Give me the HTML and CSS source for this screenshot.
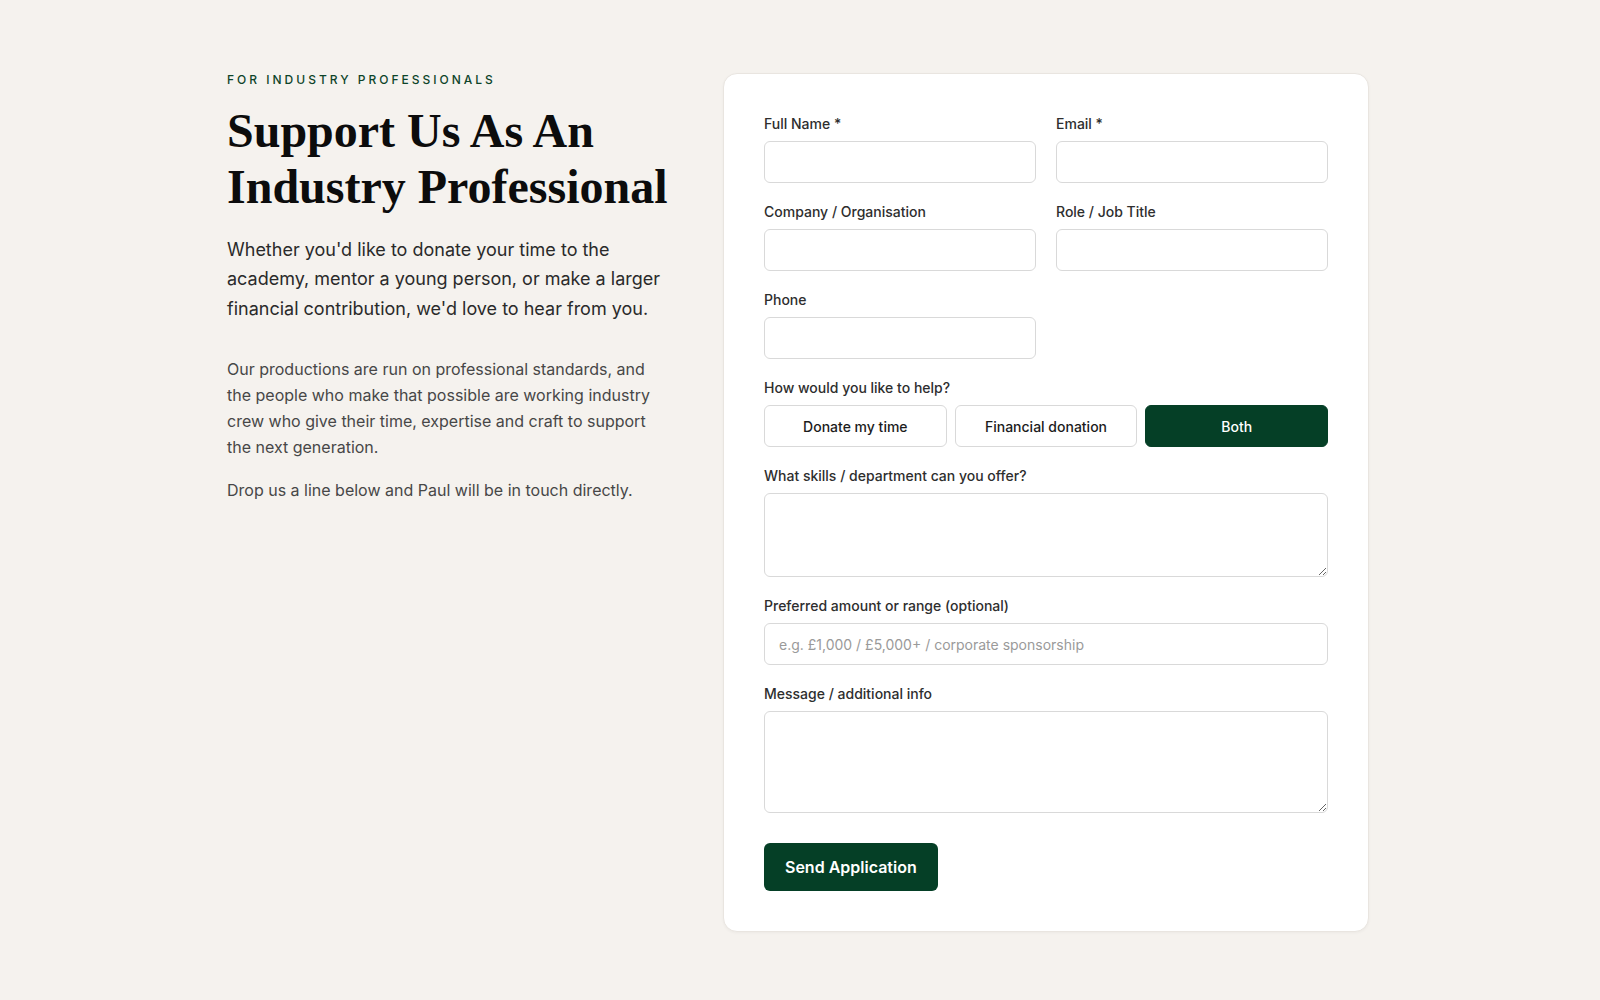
FILE: index.html
```html
<!DOCTYPE html>
<html lang="en">
<head>
    <meta charset="UTF-8">
    <meta name="viewport" content="width=device-width, initial-scale=1.0">
    <title>Support Us - Industry Professionals</title>
    <link rel="stylesheet" href="styles.css">
</head>
<body>
    <main class="support">
        <div class="intro">
            <p class="eyebrow">For Industry Professionals</p>
            <h1>Support Us As An<br>Industry Professional</h1>
            <p class="lead">Whether you'd like to donate your time to the academy, mentor a young person, or make a larger financial contribution, we'd love to hear from you.</p>
            <p class="body-text">Our productions are run on professional standards, and the people who make that possible are working industry crew who give their time, expertise and craft to support the next generation.</p>
            <p class="body-text small-gap">Drop us a line below and Paul will be in touch directly.</p>
        </div>

        <form class="card" onsubmit="return false">
            <div class="field">
                <label for="name">Full Name *</label>
                <input type="text" id="name">
            </div>
            <div class="field">
                <label for="email">Email *</label>
                <input type="email" id="email">
            </div>
            <div class="field">
                <label for="company">Company / Organisation</label>
                <input type="text" id="company">
            </div>
            <div class="field">
                <label for="role">Role / Job Title</label>
                <input type="text" id="role">
            </div>
            <div class="field">
                <label for="phone">Phone</label>
                <input type="tel" id="phone">
            </div>
            <div class="field wide">
                <label>How would you like to help?</label>
                <div class="choices">
                    <button type="button" class="choice">Donate my time</button>
                    <button type="button" class="choice">Financial donation</button>
                    <button type="button" class="choice active">Both</button>
                </div>
            </div>
            <div class="field wide">
                <label for="skills">What skills / department can you offer?</label>
                <textarea id="skills" class="short"></textarea>
            </div>
            <div class="field wide">
                <label for="amount">Preferred amount or range (optional)</label>
                <input type="text" id="amount" placeholder="e.g. £1,000 / £5,000+ / corporate sponsorship">
            </div>
            <div class="field wide">
                <label for="message">Message / additional info</label>
                <textarea id="message" class="tall"></textarea>
            </div>
            <div class="wide">
                <button type="submit" class="send">Send Application</button>
            </div>
        </form>
    </main>
    <script>
        const choices = document.querySelectorAll(".choice");
        choices.forEach((btn) => {
            btn.addEventListener("click", () => {
                choices.forEach((b) => b.classList.remove("active"));
                btn.classList.add("active");
            });
        });
    </script>
</body>
</html>
```

FILE: styles.css
```css
* {
    box-sizing: border-box;
}
body {
    margin: 0;
    background: #f5f2ee;
    font-family: Inter, "Noto Sans", Arial, sans-serif;
    color: #1e1e1e;
}
.support {
    max-width: 1150px;
    margin: 0 auto;
    padding: 73px 2px 60px 2px;
    display: grid;
    grid-template-columns: 446px 646px;
    column-gap: 50px;
    align-items: start;
}
.eyebrow {
    margin: 0 0 16px;
    font-size: 12px;
    line-height: 14px;
    font-weight: 500;
    letter-spacing: 0.25em;
    text-transform: uppercase;
    color: #0d4429;
}
h1 {
    margin: 0 0 20px;
    font-family: "Liberation Serif", "Times New Roman", serif;
    font-size: 48px;
    line-height: 56px;
    font-weight: 700;
    color: #0c0c0c;
}
.lead {
    margin: 0 0 33px;
    font-size: 18px;
    line-height: 1.63;
    color: #2a2a2a;
}
.body-text {
    margin: 0;
    font-size: 16px;
    line-height: 26px;
    color: #474747;
}
.small-gap {
    margin-top: 17px;
}
.card {
    background: #fff;
    border: 1px solid #e9e5e0;
    border-radius: 14px;
    box-shadow: 0 1px 3px rgba(0, 0, 0, 0.04);
    padding: 40px;
    display: grid;
    grid-template-columns: 1fr 1fr;
    gap: 19px 20px;
}
.field {
    display: flex;
    flex-direction: column;
}
.wide {
    grid-column: 1 / -1;
}
label {
    font-size: 14px;
    line-height: 20px;
    font-weight: 500;
    color: #2e2e2e;
    margin-bottom: 7px;
}
input, textarea {
    font-family: inherit;
    font-size: 14px;
    color: #222;
    border: 1px solid #d9d9d9;
    border-radius: 6px;
    background: #fff;
    padding: 0 14px;
    outline: none;
}
input {
    height: 42px;
}
input::placeholder {
    color: #9a9a9a;
}
textarea {
    padding: 10px 14px;
    resize: vertical;
}
textarea.short {
    height: 84px;
}
textarea.tall {
    height: 102px;
}
input:focus, textarea:focus {
    border-color: #0a4028;
}
.choices {
    display: grid;
    grid-template-columns: repeat(3, 1fr);
    gap: 8px;
}
.choice {
    height: 42px;
    border: 1px solid #d9d9d9;
    border-radius: 6px;
    background: #fff;
    font-family: inherit;
    font-size: 14px;
    font-weight: 500;
    color: #1c1c1c;
    cursor: pointer;
}
.choice.active {
    background: #053f26;
    border-color: #053f26;
    color: #fff;
}
.send {
    margin-top: 11px;
    height: 48px;
    padding: 0 21px;
    border: none;
    border-radius: 6px;
    background: #053f26;
    color: #fff;
    font-family: inherit;
    font-size: 16px;
    font-weight: 600;
    cursor: pointer;
}
.send:hover {
    background: #0a5233;
}
```
